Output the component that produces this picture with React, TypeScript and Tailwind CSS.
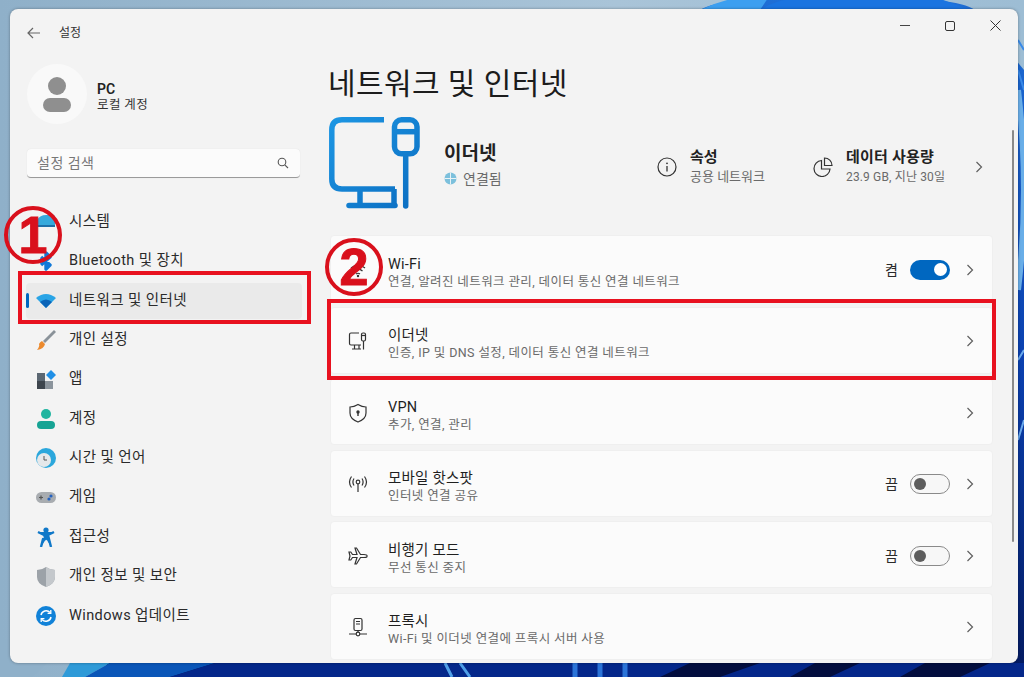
import React from "react";

const FONT = "font-['Roboto','Noto_Sans_CJK_KR',sans-serif]";

function Wallpaper() {
  return (
    <svg className="absolute inset-0" width="1024" height="677" viewBox="0 0 1024 677">
      <defs>
        <linearGradient id="sky" x1="0" y1="0" x2="1" y2="0">
          <stop offset="0" stopColor="#8fb0c9" />
          <stop offset="0.6" stopColor="#a9c4d8" />
          <stop offset="1" stopColor="#9dbdd4" />
        </linearGradient>
        <linearGradient id="deep" x1="0" y1="0" x2="0" y2="1">
          <stop offset="0" stopColor="#1f6fd6" />
          <stop offset="0.55" stopColor="#0a3fae" />
          <stop offset="1" stopColor="#03195f" />
        </linearGradient>
      </defs>
      <rect width="1024" height="677" fill="url(#sky)" />
      <path d="M700 10 C730 -10 950 -10 975 10 L1024 70 L1024 677 L100 677 L120 640 L700 640 Z" fill="url(#deep)" />
      <path d="M700 10 Q730 -5 770 -5 L760 10 Z" fill="#3c9ff0" />
      <path d="M760 10 Q780 -4 830 -5 L930 -5 L970 10 Z" fill="#1b74e0" />
      <path d="M0 640 H70 L32 677 H0 Z" fill="#8fb0c9" />
      <path d="M70 663 H110 L85 677 H62 Z" fill="#2e9ad8" />
      <path d="M110 663 H215 L170 677 H85 Z" fill="#0a56b8" />
      <path d="M215 663 H1024 V677 H170 Z" fill="#04278a" />
      <path d="M445 663 L452 677 M460 663 L470 677" stroke="#4f9fe8" strokeWidth="3" />
      <path d="M575 663 V677 M600 663 V677 M625 663 V677" stroke="#2b74d8" strokeWidth="5" />
      <path d="M660 677 L690 663 H760 L720 677 Z M790 677 L815 663 H860 L830 677 Z M900 677 L925 663 H990 L960 677 Z" fill="#020d3e" />
      <path d="M1018 90 Q1030 190 1018 290" fill="none" stroke="#69aee8" strokeWidth="6" />
      <path d="M1018 440 L1024 420 M1018 360 L1024 350" stroke="#6aa9ec" strokeWidth="2" />
      <path d="M1018 40 L1024 50 M1018 70 L1024 90" stroke="#3a8ae8" strokeWidth="2" />
    </svg>
  );
}

const S = ({ children, size = 20, vb = "0 0 20 20" }: { children: React.ReactNode; size?: number; vb?: string }) => (
  <svg width={size} height={size} viewBox={vb} className="shrink-0">
    {children}
  </svg>
);

const NavIcons: Record<string, React.ReactNode> = {
  system: (
    <S>
      <path d="M1 8 Q4 3 10 3 H17 Q19 3 19 5 V13 H1 Z" fill="#35a9dc" />
      <path d="M1 13 H19 V15 H1 Z" fill="#1d6fa8" />
    </S>
  ),
  bt: (
    <S>
      <path d="M5 6 L14 14 L10 18 V2 L14 6 L5 14" fill="none" stroke="#0f78d8" strokeWidth="3.4" strokeLinejoin="round" />
    </S>
  ),
  net: (
    <S>
      <path d="M0 7 Q10 -1 20 7 L10 17 Z" fill="#29a4e6" />
      <path d="M4 11 Q10 6 16 11 L10 17 Z" fill="#0a64b8" />
    </S>
  ),
  brush: (
    <S>
      <path d="M18 0 L20 2 L9 13 L7 11 Z" fill="#8a9299" />
      <path d="M6 11 L9 14 Q8 19 1 20 Q4 16 3 14 Q4 12 6 11 Z" fill="#ec8a2e" />
    </S>
  ),
  apps: (
    <S>
      <rect x="1" y="3" width="8" height="8" fill="#5b6772" />
      <rect x="1" y="11" width="8" height="8" fill="#3d454d" />
      <rect x="9" y="11" width="8" height="8" fill="#8b949c" />
      <path d="M15 0 L20 5 L15 10 L10 5 Z" fill="#1f8fe6" />
    </S>
  ),
  account: (
    <S>
      <circle cx="10" cy="5" r="5" fill="#1fb5a0" />
      <rect x="1" y="12" width="18" height="8" rx="4" fill="#16a394" />
    </S>
  ),
  time: (
    <S>
      <circle cx="10" cy="10" r="10" fill="#2ba7dc" />
      <circle cx="8" cy="12" r="7" fill="#e5e8ea" />
      <path d="M8 8 V12 H11" stroke="#555" strokeWidth="1" fill="none" />
    </S>
  ),
  game: (
    <S>
      <rect x="0" y="4" width="20" height="11" rx="5.5" fill="#a8acb0" />
      <path d="M3 9.5 H7 M5 7.5 V11.5" stroke="#555" strokeWidth="1.2" />
      <circle cx="15" cy="8" r="1.6" fill="#2563c0" />
      <circle cx="13" cy="11" r="1.6" fill="#2563c0" />
    </S>
  ),
  access: (
    <S>
      <circle cx="10" cy="3" r="2.6" fill="#1078c8" />
      <path d="M2 5 L8 8 H12 L18 5 M8 8 L10 12 L12 8 L13 12 L15 20 M10 12 L7 12 L5 20" fill="#1078c8" stroke="#1078c8" strokeWidth="2.4" strokeLinejoin="round" />
    </S>
  ),
  privacy: (
    <S>
      <path d="M10 0 Q14 3 19 3 V10 Q19 17 10 20 Q1 17 1 10 V3 Q6 3 10 0 Z" fill="#9ca2a8" />
      <path d="M10 0 Q14 3 19 3 V10 Q19 17 10 20 Z" fill="#c4c8cc" />
    </S>
  ),
  update: (
    <S>
      <circle cx="10" cy="10" r="10" fill="#1182d8" />
      <path d="M5 9 A5.2 5.2 0 0 1 14 6.5 M15 11 A5.2 5.2 0 0 1 6 13.5" fill="none" stroke="#fff" strokeWidth="1.5" />
      <path d="M14.8 4 V7.4 H11.6 M5.2 16 V12.6 H8.4" fill="none" stroke="#fff" strokeWidth="1.3" />
    </S>
  ),
};

const navItems: [string, string][] = [
  ["system", "시스템"],
  ["bt", "Bluetooth 및 장치"],
  ["net", "네트워크 및 인터넷"],
  ["brush", "개인 설정"],
  ["apps", "앱"],
  ["account", "계정"],
  ["time", "시간 및 언어"],
  ["game", "게임"],
  ["access", "접근성"],
  ["privacy", "개인 정보 및 보안"],
  ["update", "Windows 업데이트"],
];

function NavRow({ id, label }: { id: string; label: string }) {
  const active = id === "net";
  return (
    <div className={`relative flex h-[36px] items-center rounded-[4px] pl-[10px] ${active ? "bg-[#eaeaea]" : ""}`}>
      {active && <div className="absolute left-0 top-[10px] h-[15px] w-[3px] rounded-full bg-[#0067c0]" />}
      <div className="flex w-[33px] shrink-0">{NavIcons[id]}</div>
      <span className="text-[14.5px] leading-none tracking-[0.4px] text-[#2a2a2a]">{label}</span>
    </div>
  );
}

function Chevron() {
  return (
    <svg width="8" height="12" viewBox="0 0 8 12" className="shrink-0">
      <path d="M1.5 1 L6.5 6 L1.5 11" fill="none" stroke="#5f5f5f" strokeWidth="1.2" />
    </svg>
  );
}

const line = { fill: "none", stroke: "#333", strokeWidth: 1.2 };

const CardIcons: Record<string, React.ReactNode> = {
  wifi: (
    <S>
      <path d="M3 8 Q10 2 17 8 M5.5 11 Q10 7 14.5 11 M8 14 Q10 12.5 12 14" {...line} />
      <circle cx="10" cy="16" r="1.2" fill="#333" />
    </S>
  ),
  eth: (
    <S>
      <path d="M11 2 H3 Q1.5 2 1.5 3.5 V12.5 Q1.5 14 3 14 H13 M4 18 H13 M6.5 14 V18 M11 14 V18 M15.5 10 V18.5" {...line} />
      <rect x="13.5" y="2" width="4" height="8" rx="1.5" {...line} />
      <path d="M13.5 4.5 H17.5" {...line} />
    </S>
  ),
  vpn: (
    <S>
      <path d="M10 1.5 Q14 4 18 4 V10 Q18 16 10 19 Q2 16 2 10 V4 Q6 4 10 1.5 Z" {...line} />
      <circle cx="10" cy="9" r="1.7" fill="#333" />
      <path d="M10 9 V13" stroke="#333" strokeWidth="1.4" />
    </S>
  ),
  hotspot: (
    <S>
      <circle cx="10" cy="8" r="1.8" {...line} />
      <path d="M10 10 V18 M6 4.5 Q3.8 8 6 11.5 M14 4.5 Q16.2 8 14 11.5 M3.5 2.5 Q-0.5 8 3.5 13.5 M16.5 2.5 Q20.5 8 16.5 13.5" {...line} />
    </S>
  ),
  plane: (
    <S>
      <path d="M19 9.5 Q19 8.5 16 8.5 H12.5 L8.5 2 H7 L9 8.5 H4.5 L2.8 6 H1 L2 10 L1 14 H2.8 L4.5 11.5 H9 L7 18 H8.5 L12.5 11.5 H16 Q19 11.5 19 10.5 Z" {...line} />
    </S>
  ),
  proxy: (
    <S>
      <rect x="6" y="1.5" width="8" height="12" rx="1.5" {...line} />
      <path d="M8 4.5 H12 M8 7 H12 M10 13.5 V16 M1 17 H19" {...line} />
      <circle cx="10" cy="17" r="1.8" fill="#fbfbfb" stroke="#333" strokeWidth="1.2" />
    </S>
  ),
};

function Toggle({ on }: { on: boolean }) {
  return (
    <div className="flex items-center gap-[12px]">
      <span className="text-[14px] leading-none text-[#2a2a2a]">{on ? "켬" : "끔"}</span>
      <div
        className={`flex h-[20px] w-[40px] items-center rounded-full px-[3px] ${
          on ? "justify-end bg-[#0067c0]" : "justify-start border border-[#8a8a8a] bg-[#f7f7f7]"
        }`}
      >
        <div className={`rounded-full ${on ? "h-[13px] w-[13px] bg-white" : "h-[12px] w-[12px] bg-[#5d5d5d]"}`} />
      </div>
    </div>
  );
}

const cards: { icon: string; title: string; sub: string; toggle?: boolean }[] = [
  { icon: "wifi", title: "Wi-Fi", sub: "연결, 알려진 네트워크 관리, 데이터 통신 연결 네트워크", toggle: true },
  { icon: "eth", title: "이더넷", sub: "인증, IP 및 DNS 설정, 데이터 통신 연결 네트워크" },
  { icon: "vpn", title: "VPN", sub: "추가, 연결, 관리" },
  { icon: "hotspot", title: "모바일 핫스팟", sub: "인터넷 연결 공유", toggle: false },
  { icon: "plane", title: "비행기 모드", sub: "무선 통신 중지", toggle: false },
  { icon: "proxy", title: "프록시", sub: "Wi-Fi 및 이더넷 연결에 프록시 서버 사용" },
];

function Card({ icon, title, sub, toggle }: (typeof cards)[number]) {
  return (
    <div className="flex h-[67px] items-center rounded-[4px] border border-[#efefef] bg-[#fbfbfb] pl-[17px] pr-[18px] pt-[2px]">
      <div className="flex w-[40px] shrink-0">{CardIcons[icon]}</div>
      <div className="flex flex-1 flex-col pt-[6px]">
        <span className="text-[14.5px] leading-[18px] tracking-[0.2px] text-[#1f1f1f]">{title}</span>
        <span className="text-[12.5px] leading-[16px] tracking-[0.4px] text-[#6a6a6a]">{sub}</span>
      </div>
      {toggle !== undefined && (
        <div className="mr-[16px]">
          <Toggle on={toggle} />
        </div>
      )}
      <Chevron />
    </div>
  );
}

function MonitorIcon() {
  return (
    <svg width="92" height="93" viewBox="0 0 92 93" className="ml-[-1px] shrink-0">
      <defs>
        <linearGradient id="mon" gradientUnits="userSpaceOnUse" x1="0" y1="0" x2="92" y2="93">
          <stop offset="0" stopColor="#1d97e4" />
          <stop offset="1" stopColor="#0a6cc0" />
        </linearGradient>
      </defs>
      <g fill="none" stroke="url(#mon)" strokeWidth="5.5" strokeLinecap="round">
        <path d="M55 2.8 H13 Q2.8 2.8 2.8 13 V62 Q2.8 72 13 72 H66" strokeLinecap="butt" />
        <path d="M20 88.5 H66" />
        <path d="M31 72 V88 M65 72 V88" strokeLinecap="butt" />
        <path d="M76.7 38 V89" />
        <rect x="65.5" y="2.8" width="22.5" height="34" rx="7" />
        <path d="M65.5 14.7 H88" strokeLinecap="butt" />
      </g>
    </svg>
  );
}

export default function App() {
  return (
    <div className={`relative h-[677px] w-[1024px] overflow-hidden ${FONT}`}>
      <Wallpaper />
      <div className="relative ml-[10px] mt-[9px] flex h-[654px] w-[1008px] rounded-[8px] bg-[#f3f3f3] shadow-[0_0_3px_rgba(0,0,0,0.35)]">
        {/* sidebar */}
        <div className="flex w-[310px] shrink-0 flex-col pl-[17px] pr-[20px]">
          <div className="mt-[15px] flex h-[18px] items-center">
            <svg width="14" height="12" viewBox="0 0 14 12" className="shrink-0">
              <path d="M13 6 H1.5 M6 1 L1 6 L6 11" fill="none" stroke="#666" strokeWidth="1.2" />
            </svg>
            <span className="ml-[18px] text-[12px] leading-none text-[#333]">설정</span>
          </div>
          <div className="mt-[22px] flex items-center">
            <div className="flex h-[60px] w-[60px] shrink-0 flex-col items-center justify-center gap-[3px] rounded-full bg-[#f9f9f9]">
              <div className="h-[18px] w-[18px] rounded-full bg-[#8f8f8f]" />
              <div className="h-[14px] w-[28px] rounded-[9px] bg-[#8f8f8f]" />
            </div>
            <div className="ml-[10px] mt-[4px] flex flex-col">
              <span className="text-[14px] font-semibold leading-[16px] text-[#222]">PC</span>
              <span className="text-[12.5px] leading-[15px] tracking-[0.4px] text-[#333]">로컬 계정</span>
            </div>
          </div>
          <div className="mt-[25px] flex h-[29px] items-center justify-between rounded-[4px] border-b border-b-[#9a9a9a] bg-[#fbfbfb] pl-[10px] pr-[11px] shadow-[0_0_1px_rgba(0,0,0,0.12)]">
            <span className="text-[14px] leading-none tracking-[0.5px] text-[#777]">설정 검색</span>
            <svg width="12" height="12" viewBox="0 0 12 12" className="shrink-0">
              <circle cx="5" cy="5" r="3.8" fill="none" stroke="#555" strokeWidth="1.1" />
              <path d="M7.8 7.8 L11 11" stroke="#555" strokeWidth="1.1" />
            </svg>
          </div>
          <div className="ml-[-1px] mr-[-2px] mt-[26px] flex flex-col gap-[3.4px]">
            {navItems.map(([id, label]) => (
              <NavRow key={id} id={id} label={label} />
            ))}
          </div>
        </div>
        {/* content */}
        <div className="flex min-w-0 flex-1 flex-col pl-[10px] pr-[25px]">
          <div className="flex h-[12px] shrink-0 items-start justify-end">
            <div className="mr-[-8px] mt-[11px] flex items-center gap-[35px]">
              <div className="h-[1px] w-[10px] bg-[#444]" />
              <div className="h-[10px] w-[10px] rounded-[2px] border border-[#333]" />
              <svg width="11" height="11" viewBox="0 0 11 11">
                <path d="M0.5 0.5 L10.5 10.5 M10.5 0.5 L0.5 10.5" stroke="#333" strokeWidth="1" />
              </svg>
            </div>
          </div>
          <h1 className="ml-[-2px] mt-[43px] text-[30px] font-normal leading-[40px] tracking-[0.4px] text-[#1c1c1c]">네트워크 및 인터넷</h1>
          <div className="mt-[13px] flex h-[93px] items-center pr-[10px]">
            <MonitorIcon />
            <div className="ml-[23px] flex flex-1 flex-col gap-[7px] pt-[1px]">
              <span className="text-[19px] font-semibold leading-[22px] text-[#222]">이더넷</span>
              <div className="flex items-center gap-[6px]">
                <svg width="13" height="13" viewBox="0 0 13 13">
                  <circle cx="6.5" cy="6.5" r="6" fill="#7cc0dc" />
                  <path d="M0.5 6.5 H12.5 M6.5 0.5 V12.5" stroke="#e8f2f6" strokeWidth="1" />
                </svg>
                <span className="text-[14px] leading-none text-[#6a6a6a]">연결됨</span>
              </div>
            </div>
            <div className="mt-[7px] flex items-center gap-[13px]">
              <svg width="20" height="20" viewBox="0 0 20 20" className="shrink-0">
                <circle cx="10" cy="10" r="9" fill="none" stroke="#333" strokeWidth="1.2" />
                <path d="M10 9 V14.5" stroke="#333" strokeWidth="1.3" />
                <circle cx="10" cy="6.3" r="0.9" fill="#333" />
              </svg>
              <div className="flex w-[123px] flex-col">
                <span className="text-[15px] font-semibold leading-[20px] text-[#222]">속성</span>
                <span className="text-[13px] leading-[20px] text-[#6a6a6a]">공용 네트워크</span>
              </div>
            </div>
            <div className="mt-[7px] flex items-center gap-[13px]">
              <svg width="20" height="20" viewBox="0 0 20 20" className="shrink-0">
                <path d="M8.5 3.5 A8 8 0 1 0 17 12 H8.5 Z" fill="none" stroke="#333" strokeWidth="1.2" />
                <path d="M11.5 1 A7.5 7.5 0 0 1 19 8.5 H11.5 Z" fill="none" stroke="#333" strokeWidth="1.2" />
              </svg>
              <div className="flex w-[120px] flex-col">
                <span className="text-[15px] font-semibold leading-[20px] tracking-[0.2px] text-[#222]">데이터 사용량</span>
                <span className="text-[12px] leading-[20px] tracking-[0.15px] text-[#6a6a6a]">23.9 GB, 지난 30일</span>
              </div>
            </div>
            <div className="ml-[9px] mt-[7px]">
              <Chevron />
            </div>
          </div>
          <div className="mt-[25px] flex flex-col gap-[4.6px]">
            {cards.map((c) => (
              <Card key={c.icon} {...c} />
            ))}
          </div>
        </div>
        {/* scrollbar */}
        <div className="absolute left-[1002px] top-[121px] h-[412px] w-[2px] rounded-full bg-[#8a8a8a]" />
      </div>

      {/* annotations */}
      <div className="absolute left-[18px] top-[271px] h-[53px] w-[293px] border-[4px] border-[#e8111f]" />
      <div className="absolute left-[327px] top-[299px] h-[81px] w-[669px] border-[4px] border-[#e8111f]" />
      <div className="absolute left-[4px] top-[206px] flex h-[58px] w-[58px] items-center justify-center rounded-full border-[4px] border-[#d9101c]">
        <span className="font-['Liberation_Sans',sans-serif] text-[52px] font-bold leading-none text-[#d9101c] [-webkit-text-stroke:1px_#d9101c]">1</span>
      </div>
      <div className="absolute left-[325px] top-[238px] flex h-[58px] w-[58px] items-center justify-center rounded-full border-[4px] border-[#d9101c]">
        <span className="font-['Liberation_Sans',sans-serif] text-[52px] font-bold leading-none text-[#d9101c] [-webkit-text-stroke:1px_#d9101c]">2</span>
      </div>
    </div>
  );
}
